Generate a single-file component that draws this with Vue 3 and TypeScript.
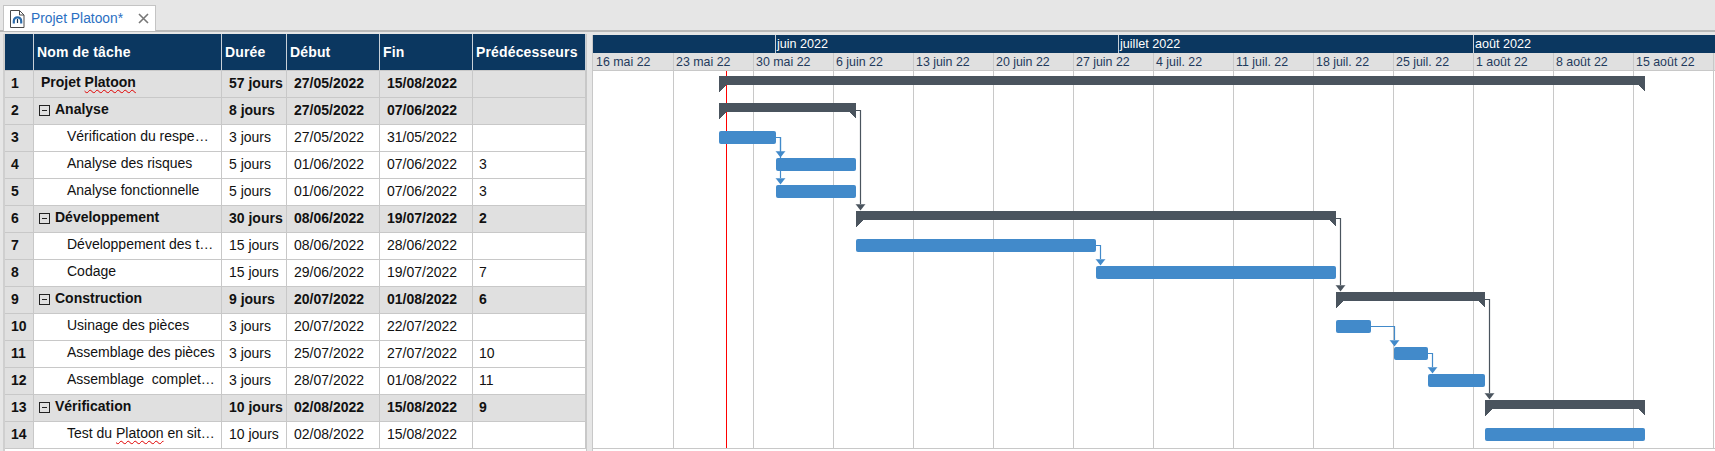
<script setup lang="ts">
interface Task {
  name: string;
  duration: string;
  start: string;
  end: string;
  pred?: number;
  summary?: boolean;
  project?: boolean;
  wavy?: [string, string, string];
}

const tasks: Task[] = [
  { name: "", wavy: ["Projet ", "Platoon", ""], duration: "57 jours", start: "27/05/2022", end: "15/08/2022", summary: true, project: true },
  { name: "Analyse", duration: "8 jours", start: "27/05/2022", end: "07/06/2022", summary: true },
  { name: "Vérification du respe…", duration: "3 jours", start: "27/05/2022", end: "31/05/2022" },
  { name: "Analyse des risques", duration: "5 jours", start: "01/06/2022", end: "07/06/2022", pred: 3 },
  { name: "Analyse fonctionnelle", duration: "5 jours", start: "01/06/2022", end: "07/06/2022", pred: 3 },
  { name: "Développement", duration: "30 jours", start: "08/06/2022", end: "19/07/2022", pred: 2, summary: true },
  { name: "Développement des t…", duration: "15 jours", start: "08/06/2022", end: "28/06/2022" },
  { name: "Codage", duration: "15 jours", start: "29/06/2022", end: "19/07/2022", pred: 7 },
  { name: "Construction", duration: "9 jours", start: "20/07/2022", end: "01/08/2022", pred: 6, summary: true },
  { name: "Usinage des pièces", duration: "3 jours", start: "20/07/2022", end: "22/07/2022" },
  { name: "Assemblage des pièces", duration: "3 jours", start: "25/07/2022", end: "27/07/2022", pred: 10 },
  { name: "Assemblage  complet…", duration: "3 jours", start: "28/07/2022", end: "01/08/2022", pred: 11 },
  { name: "Vérification", duration: "10 jours", start: "02/08/2022", end: "15/08/2022", pred: 9, summary: true },
  { name: "", wavy: ["Test du ", "Platoon", " en sit…"], duration: "10 jours", start: "02/08/2022", end: "15/08/2022" },
];

const months = [
  { label: "", width: 182 },
  { label: "juin 2022", width: 343 },
  { label: "juillet 2022", width: 355 },
  { label: "août 2022", width: 242 },
];

const weeks = [
  "16 mai 22", "23 mai 22", "30 mai 22", "6 juin 22", "13 juin 22", "20 juin 22", "27 juin 22",
  "4 juil. 22", "11 juil. 22", "18 juil. 22", "25 juil. 22", "1 août 22", "8 août 22", "15 août 22", "",
];

const ROW = 27;
const origin = Date.UTC(2022, 4, 16);

function days(date: string) {
  const [d, m, y] = date.split("/").map(Number);
  return (Date.UTC(y, m - 1, d) - origin) / 86400000;
}

// 80px per week, pixel-snapped the way the reference chart is
function dayX(n: number) {
  return Math.floor((n * 80) / 7) + 1;
}

const bars = tasks.map((t, i) => {
  const x0 = dayX(days(t.start));
  const x1 = dayX(days(t.end) + 1);
  const top = i * ROW + (t.summary ? 6 : 7);
  return { x0, x1, top, summary: !!t.summary, mid: top + (t.summary ? 7 : 6) };
});

function summaryShape(b: { x0: number; x1: number; top: number }) {
  const { x0, x1, top } = b;
  return [
    [x0, top], [x1, top], [x1, top + 16], [x1 - 7, top + 9], [x0 + 7, top + 9], [x0, top + 16],
  ].map((p) => p.join(",")).join(" ");
}

const links = tasks.flatMap((t, i) => {
  if (!t.pred) return [];
  const from = bars[t.pred - 1];
  const to = bars[i];
  const x = Math.max(from.x1 + 4, to.x0) + 0.5;
  const tip = i * ROW + (t.summary ? 5 : 6);
  return [{
    key: i,
    color: from.summary ? "#4a545e" : "#428aca",
    path: `M${from.x1} ${from.mid + 0.5}H${x}V${tip - 5}`,
    arrow: `${x - 5},${tip - 6} ${x + 5},${tip - 6} ${x},${tip + 0.5}`,
    cap: `M${x - 5} ${tip - 5.5}H${x + 5}`,
  }];
});
</script>

<template>
  <div class="page">
    <div class="tabbar">
      <div class="tab">
        <svg class="tab-icon" width="15" height="18" viewBox="0 0 15 18">
          <path d="M.5.5H9.5L14 5V17.5H.5Z" fill="#fff" stroke="#4a4a4a" />
          <path d="M9.5 .5V5H14" fill="none" stroke="#4a4a4a" />
          <path d="M3.8 13.5V11A3.7 3.7 0 0 1 11.2 11V13.5" fill="none" stroke="#2c6cab" stroke-width="2.2" />
          <path d="M7.5 9V13" stroke="#16324f" stroke-width="1.2" />
        </svg>
        <span class="tab-title">Projet Platoon*</span>
        <svg class="tab-close" width="11" height="11" viewBox="0 0 11 11">
          <path d="M1 1L10 10M10 1L1 10" stroke="#777" stroke-width="1.6" />
        </svg>
      </div>
    </div>

    <div class="panes">
      <div class="grid">
        <div class="head"></div>
        <div class="head">Nom de tâche</div>
        <div class="head">Durée</div>
        <div class="head">Début</div>
        <div class="head">Fin</div>
        <div class="head">Prédécesseurs</div>

        <div v-for="(t, i) in tasks" :key="i" class="row" :class="{ summary: t.summary }">
          <div class="cell num">{{ i + 1 }}</div>
          <div class="cell name" :class="{ project: t.project, leaf: !t.summary }">
            <svg v-if="t.summary && !t.project" class="toggle" width="11" height="11" viewBox="0 0 11 11">
              <rect x=".5" y=".5" width="10" height="10" fill="none" stroke="#222" />
              <path d="M3 5.5H8" stroke="#222" />
            </svg>
            <span v-if="t.wavy">{{ t.wavy[0] }}<span class="wavy">{{ t.wavy[1] }}</span>{{ t.wavy[2] }}</span>
            <span v-else>{{ t.name }}</span>
          </div>
          <div class="cell val">{{ t.duration }}</div>
          <div class="cell val">{{ t.start }}</div>
          <div class="cell val">{{ t.end }}</div>
          <div class="cell val pred">{{ t.pred }}</div>
        </div>
      </div>

      <div class="gantt">
        <div class="months">
          <div v-for="m in months" :key="m.label" class="month" :style="{ width: m.width + 'px' }">{{ m.label }}</div>
        </div>
        <div class="weeks">
          <div v-for="w in weeks" :key="w" class="week">{{ w }}</div>
        </div>
        <svg class="chart" width="1122" height="377" viewBox="0 1 1122 377">
          <path
            v-for="w in 14"
            :key="w"
            :d="`M${w * 80 + 0.5} 0V378`"
            stroke="#c8c8c8"
          />
          <path d="M133.5 0V378" stroke="#f00" />
          <g v-for="l in links" :key="l.key">
            <path :d="l.path" fill="none" :stroke="l.color" stroke-width="1.2" />
            <polygon :points="l.arrow" :fill="l.color" />
            <path :d="l.cap" stroke="#fff" stroke-opacity=".25" />
          </g>
          <template v-for="(b, i) in bars" :key="i">
            <polygon v-if="b.summary" :points="summaryShape(b)" fill="#4a545e" shape-rendering="crispEdges" />
            <rect v-else :x="b.x0" :y="b.top" :width="b.x1 - b.x0" height="13" rx="2" fill="#428aca" />
          </template>
        </svg>
      </div>
    </div>
  </div>
</template>

<style>
html,
body {
  margin: 0;
  background: #e6e6e6;
}
</style>

<style scoped>
.page {
  width: 1715px;
  height: 451px;
  overflow: hidden;
  background: #e6e6e6;
  font-family: "Liberation Sans", Arial, sans-serif;
  font-size: 14px;
  color: #111;
  display: flex;
  flex-direction: column;
}

.tabbar {
  height: 30px;
  padding: 5px 0 0 3px;
  box-sizing: border-box;
  display: flex;
}

.tab {
  width: 153px;
  height: 26px;
  box-sizing: border-box;
  background: #fff;
  border: 1px solid #c4c4c4;
  border-bottom: 0;
  display: flex;
  align-items: center;
  padding-left: 6px;
  position: relative;
  z-index: 1;
}

.tab-icon {
  flex: none;
}

.tab-title {
  margin-left: 6px;
  color: #2b6fc2;
  font-size: 13.8px;
  width: 106px;
  white-space: nowrap;
}

.tab-close {
  margin-left: 1px;
}

.panes {
  flex: 1;
  display: flex;
  border-top: 2px solid #b9b9b9;
  padding: 2px 0 0 3px;
  min-height: 0;
}

.grid {
  width: 584px;
  box-sizing: border-box;
  background: #fff;
  border-left: 2px solid #cfcfcf;
  border-right: 1px solid #c8c8c8;
  display: grid;
  grid-template-columns: 29px 188px 65px 93px 93px 113px;
  grid-template-rows: 37px repeat(14, 27px);
  align-content: start;
}

.head {
  background: #0b3760;
  color: #fff;
  font-weight: 700;
  letter-spacing: 0.15px;
  border-right: 1px solid #c8d0d8;
  border-bottom: 1px solid #c8c8c8;
  padding-left: 3px;
  display: flex;
  align-items: center;
  box-sizing: border-box;
  white-space: nowrap;
}

.row {
  display: contents;
}

.cell {
  background: #fff;
  border-right: 1px solid #c8c8c8;
  border-bottom: 1px solid #c8c8c8;
  box-sizing: border-box;
  display: flex;
  align-items: center;
  padding: 0 0 2px 7px;
  white-space: pre;
}

.summary .cell {
  background: #e0e0e0;
  font-weight: 700;
}

.cell.num {
  background: #e0e0e0;
  font-weight: 700;
  padding-left: 6px;
}

.cell.pred {
  padding-left: 6px;
}

.cell.name {
  padding: 0 0 5px 4px;
}

.cell.name.project {
  padding-left: 7px;
}

.cell.name.leaf {
  padding-left: 33px;
}

.toggle {
  margin: 4px 5px 0 1px;
  flex: none;
}

.wavy {
  text-decoration: underline wavy #e00000 1px;
  text-underline-offset: 2px;
}

.gantt {
  margin: 1px 0 0 5px;
  width: 1123px;
  border-left: 1px solid #c8c8c8;
  display: flex;
  flex-direction: column;
  background: #fff;
  box-sizing: border-box;
}

.months {
  height: 18px;
  display: flex;
  flex: none;
  background: #0b3760;
}

.month {
  box-sizing: border-box;
  border-left: 1px solid #c8d0d8;
  color: #fff;
  font-size: 12.6px;
  padding-left: 1px;
  line-height: 19px;
  white-space: nowrap;
  flex: none;
}

.month:first-child {
  border-left: 0;
}

.weeks {
  height: 18px;
  display: flex;
  flex: none;
  background: #e0e0e0;
  border-bottom: 1px solid #c8c8c8;
  box-sizing: border-box;
}

.week {
  width: 80px;
  flex: none;
  box-sizing: border-box;
  border-left: 1px solid #c8c8c8;
  color: #1f3a5c;
  font-size: 12.4px;
  padding-left: 2px;
  line-height: 18px;
  white-space: nowrap;
}

.week:first-child {
  border-left: 0;
  padding-left: 3px;
}

.chart {
  display: block;
  flex: none;
  border-bottom: 1px solid #c8c8c8;
}
</style>
